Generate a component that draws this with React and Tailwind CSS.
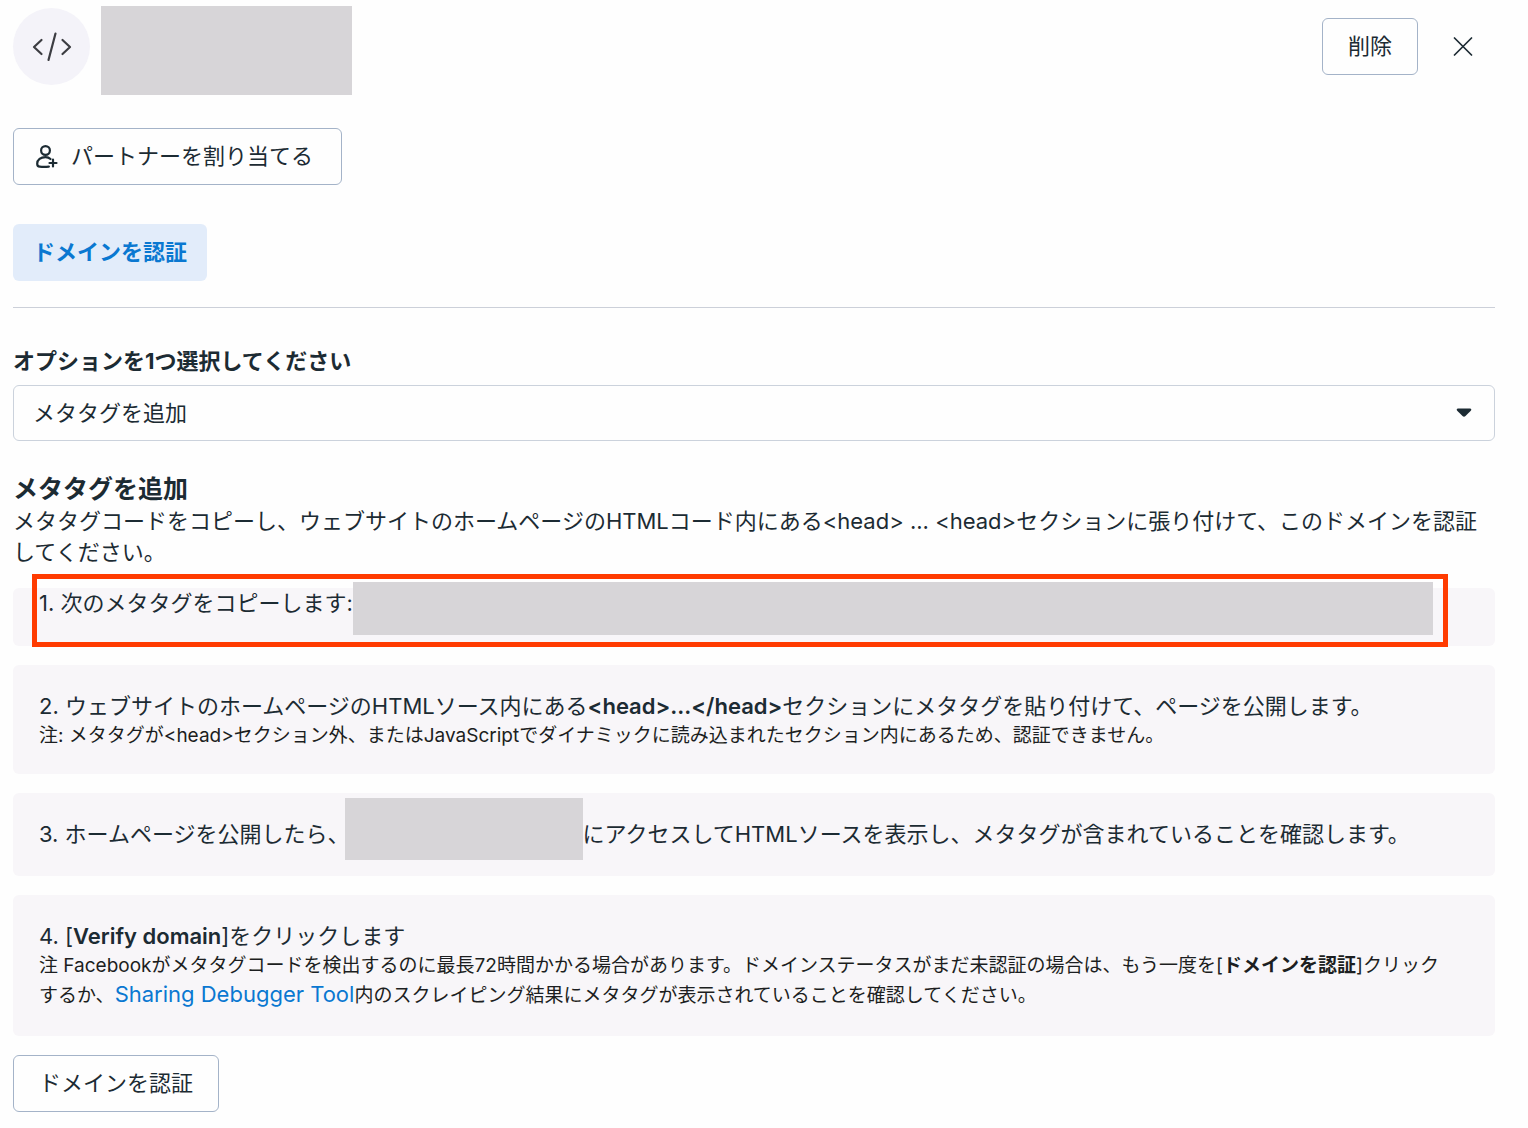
import { useState } from "react";

function CodeIcon() {
  return (
    <svg
      width="40"
      height="32"
      viewBox="0 0 40 32"
      fill="none"
      stroke="#3c3d42"
      strokeWidth="2.2"
      strokeLinecap="round"
      strokeLinejoin="round"
      aria-hidden="true"
    >
      <path d="M9.500 9 2 16l7.500 7" />
      <path d="M30.500 9l7.500 7-7.500 7" />
      <path d="M23.500 2.500 16.500 29" />
    </svg>
  );
}

function PartnerIcon() {
  return (
    <svg
      width="24"
      height="24"
      viewBox="0 0 24 24"
      fill="none"
      stroke="#1c2b33"
      strokeWidth="2.200"
      strokeLinecap="round"
      strokeLinejoin="round"
      aria-hidden="true"
    >
      <circle cx="11.500" cy="5.500" r="4.400" />
      <path d="M16.500 14C15 12.600 13.500 12.200 11.500 12.200c-4.800 0-8.300 2.400-8.300 6.600 0 2 .8 2.800 2.500 2.900 2.600.3 6 .3 9.200 0" />
      <path d="M19 14.500v7M15.500 18h7" />
    </svg>
  );
}

function CloseIcon() {
  return (
    <svg
      width="20"
      height="20"
      viewBox="0 0 20 20"
      fill="none"
      stroke="#1c2b33"
      strokeWidth="1.700"
      strokeLinecap="round"
      aria-hidden="true"
    >
      <path d="M1.500 1l17 17M18.500 1l-17 17" />
    </svg>
  );
}

function OutlineButton({ className, children }) {
  return (
    <button
      type="button"
      className={`flex h-[57px] cursor-pointer items-center rounded-md border border-[#a4b3c8] bg-[#fefefe] px-[25px] hover:bg-gray-50 ${className || ""}`}
    >
      {children}
    </button>
  );
}

function Redacted({ className }) {
  return <span aria-hidden="true" className={`block bg-[#d7d5d8] ${className}`} />;
}

export default function App() {
  const [option, setOption] = useState("meta");

  return (
    <main className="min-h-screen bg-[#fefefe] pt-1.5 pr-[33px] pb-[15px] pl-[13px] font-['Inter','Noto_Sans_CJK_JP',sans-serif] text-[22px] leading-[31px] text-[#1c2b33]">
      <header className="flex items-start">
        <div className="mt-0.5 flex size-[77px] items-center justify-center rounded-full bg-[#f4f3f9]">
          <CodeIcon />
        </div>
        <Redacted className="ml-[11px] h-[89px] w-[251px]" />
        <div className="mt-3 ml-auto flex items-center">
          <OutlineButton>削除</OutlineButton>
          <button type="button" aria-label="閉じる" className="mr-3 ml-[25px] cursor-pointer p-2.5">
            <CloseIcon />
          </button>
        </div>
      </header>

      <OutlineButton className="mt-[33px] gap-[13px] !pr-7 !pl-5">
        <PartnerIcon />
        パートナーを割り当てる
      </OutlineButton>

      <nav className="mt-[39px] border-b border-[#ccd0d9] pb-[26px]">
        <button
          type="button"
          className="flex h-[57px] cursor-pointer items-center rounded-md bg-[#e2ecfa] px-5 font-bold text-[#0a78d1]"
        >
          ドメインを認証
        </button>
      </nav>

      <label htmlFor="verify-option" className="mt-[38px] block font-bold">
        オプションを1つ選択してください
      </label>
      <div className="relative mt-2">
        <select
          id="verify-option"
          value={option}
          onChange={(e) => setOption(e.target.value)}
          className="h-14 w-full appearance-none rounded-md border border-[#cbd2dc] bg-[#fefefe] px-[19px]"
        >
          <option value="meta">メタタグを追加</option>
        </select>
        <svg
          width="16"
          height="10"
          viewBox="0 0 16 10"
          className="pointer-events-none absolute top-[23px] right-[23px]"
          aria-hidden="true"
        >
          <path
            d="M2 .500h12c1.300 0 1.700 1.300.8 2.200L9.500 8c-.9.900-2.100.900-3 0L1.200 2.700C.3 1.800.7.500 2 .500z"
            fill="#1c2b33"
          />
        </svg>
      </div>

      <h2 className="mt-8 text-[25px] leading-[33px] font-bold">メタタグを追加</h2>
      <p>
        メタタグコードをコピーし、ウェブサイトのホームページのHTMLコード内にある&lt;head&gt; ...
        &lt;head&gt;セクションに張り付けて、このドメインを認証してください。
      </p>

      <ol className="mt-5 flex flex-col gap-[19px] leading-[29px]">
        <li className="relative flex h-[58px] rounded-md bg-[#f8f6f9] pr-[62px] pl-[26px]">
          <span className="shrink-0 pt-px">1. 次のメタタグをコピーします:</span>
          <Redacted className="-mt-1.5 h-[53px] flex-1" />
          <span
            aria-hidden="true"
            className="pointer-events-none absolute -top-3.5 right-[47px] -bottom-px left-[19px] border-5 border-[#ff3b00]"
          />
        </li>

        <li className="rounded-md bg-[#f8f6f9] px-[26px] pt-[27px] pb-6">
          <p>
            2. ウェブサイトのホームページのHTMLソース内にある
            <strong className="font-semibold">&lt;head&gt;...&lt;/head&gt;</strong>
            セクションにメタタグを貼り付けて、ページを公開します。
          </p>
          <p className="text-[19px] text-[#1c1e21]">
            注: メタタグが&lt;head&gt;セクション外、またはJavaScriptでダイナミックに読み込まれたセクション内にあるため、認証できません。
          </p>
        </li>

        <li className="flex rounded-md bg-[#f8f6f9] px-[26px] pt-[27px] pb-[27px]">
          <span>3. ホームページを公開したら、</span>
          <Redacted className="-mt-[22px] -mb-[11px] -ml-[5px] h-[62px] w-[238px]" />
          <span>にアクセスしてHTMLソースを表示し、メタタグが含まれていることを確認します。</span>
        </li>

        <li className="rounded-md bg-[#f8f6f9] pt-[27px] pr-10 pb-[26px] pl-[26px]">
          <p>
            4. [<strong className="font-semibold">Verify domain</strong>]をクリックします
          </p>
          <p className="text-[19px] text-[#1c1e21]">
            注 Facebookがメタタグコードを検出するのに最長72時間かかる場合があります。ドメインステータスがまだ未認証の場合は、もう一度を[
            <strong className="font-bold">ドメインを認証</strong>]クリックするか、
            <a href="#debugger" className="text-[22px] text-[#0a78d1] hover:underline">
              Sharing Debugger Tool
            </a>
            内のスクレイピング結果にメタタグが表示されていることを確認してください。
          </p>
        </li>
      </ol>

      <OutlineButton className="mt-[19px]">ドメインを認証</OutlineButton>
    </main>
  );
}
